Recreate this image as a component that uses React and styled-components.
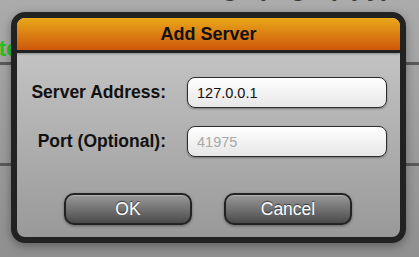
import styled, { createGlobalStyle } from "styled-components";

const GlobalStyle = createGlobalStyle`
  html, body {
    margin: 0;
    padding: 0;
  }
  body {
    width: 419px;
    height: 257px;
    overflow: hidden;
    font-family: "Liberation Sans", Arial, sans-serif;
    background: linear-gradient(#ababab, #8f8f8f);
  }
`;

const Page = styled.div`
  position: relative;
  width: 419px;
  height: 257px;
  overflow: hidden;
`;

const PageTitle = styled.div`
  margin-top: -28px;
  padding-left: 150px;
  font-size: 26px;
  line-height: 30px;
  font-weight: bold;
  color: #3a3a3a;
  height: 30px;
  white-space: nowrap;
`;

const StatusText = styled.div`
  margin-top: 34px;
  margin-left: -82px;
  font-size: 22px;
  line-height: 26px;
  font-weight: bold;
  color: #22c322;
  height: 26px;
  white-space: nowrap;
`;

const Rule = styled.div`
  height: 3px;
  background: #5a5a5a;
  margin-top: ${(p) => p.$gap}px;
`;

const Overlay = styled.div`
  position: absolute;
  left: 11px;
  top: 12px;
`;

const Dialog = styled.div`
  width: 383px;
  height: 219px;
  border: 6px solid #222;
  border-radius: 14px;
  overflow: hidden;
  display: flex;
  flex-direction: column;
  background: linear-gradient(#cbcbcb, #999);
  box-shadow: 0 3px 10px rgba(0, 0, 0, 0.35);
`;

const Header = styled.div`
  height: 32px;
  flex: none;
  display: flex;
  align-items: center;
  justify-content: center;
  background: linear-gradient(#e9a81a, #cd580b);
  border-bottom: 3px solid #222;
  box-shadow: 0 1px 2px rgba(0, 0, 0, 0.3);
  font-size: 18px;
  font-weight: bold;
  color: #111;
`;

const Form = styled.div`
  display: grid;
  grid-template-columns: 149px 200px;
  column-gap: 21px;
  row-gap: 18px;
  align-items: center;
  padding-top: 24px;
`;

const Label = styled.label`
  text-align: right;
  font-size: 17.5px;
  font-weight: bold;
  color: #111;
  white-space: nowrap;
`;

const Input = styled.input`
  box-sizing: border-box;
  height: 31px;
  width: 200px;
  border: 1px solid #2c2c2c;
  border-radius: 8px;
  background: linear-gradient(#ffffff, #e6e6e6);
  box-shadow: 0 1px 2px rgba(0, 0, 0, 0.35);
  padding: 0 9px;
  font-family: "Liberation Sans", Arial, sans-serif;
  font-size: 14.5px;
  color: #111;
  outline: none;
  &::placeholder {
    color: #a8a8a8;
  }
`;

const Buttons = styled.div`
  display: flex;
  justify-content: center;
  gap: 32px;
  margin-top: 36px;
  padding-right: 1px;
`;

const Button = styled.button`
  box-sizing: border-box;
  width: 128px;
  height: 32px;
  border: 2px solid #222;
  border-radius: 10px;
  background: linear-gradient(#9a9a9a, #4a4a4a);
  box-shadow: inset 0 1px 0 rgba(255, 255, 255, 0.25), 0 1px 3px rgba(0, 0, 0, 0.4);
  font-family: "Liberation Sans", Arial, sans-serif;
  font-size: 17.5px;
  color: #fff;
  text-shadow: 0 -1px 1px rgba(0, 0, 0, 0.6);
  padding: 0;
`;

export default function App() {
  return (
    <>
      <GlobalStyle />
      <Page>
        <PageTitle>Settings page (spy)</PageTitle>
        <StatusText>Connected</StatusText>
        <Rule $gap={0} />
        <Rule $gap={98} />
        <Overlay>
          <Dialog>
            <Header>Add Server</Header>
            <Form>
              <Label>Server Address:</Label>
              <Input defaultValue="127.0.0.1" />
              <Label>Port (Optional):</Label>
              <Input placeholder="41975" />
            </Form>
            <Buttons>
              <Button>OK</Button>
              <Button>Cancel</Button>
            </Buttons>
          </Dialog>
        </Overlay>
      </Page>
    </>
  );
}
